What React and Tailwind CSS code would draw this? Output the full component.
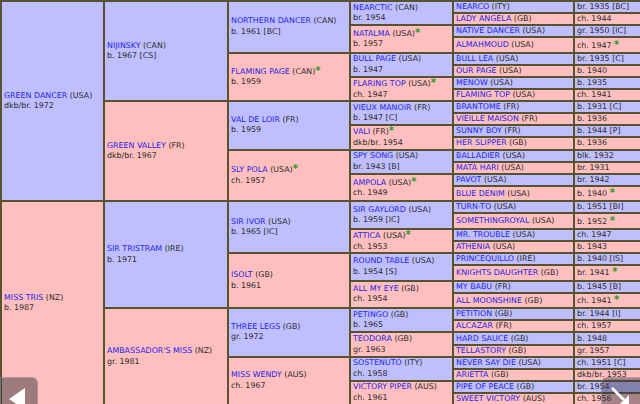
import React from "react";

const h = (name, country, year, star, sire, dam) => ({ name, country, year, star, sire, dam });
const L = (name, country, year, star) => ({ name, country, year, star });

const tree = [
  h("GREEN DANCER", "USA", "dkb/br. 1972", false,
    h("NIJINSKY", "CAN", "b. 1967 [CS]", false,
      h("NORTHERN DANCER", "CAN", "b. 1961 [BC]", false,
        h("NEARCTIC", "CAN", "br. 1954", false, L("NEARCO", "ITY", "br. 1935 [BC]"), L("LADY ANGELA", "GB", "ch. 1944")),
        h("NATALMA", "USA", "b. 1957", true, L("NATIVE DANCER", "USA", "gr. 1950 [IC]"), L("ALMAHMOUD", "USA", "ch. 1947", true))),
      h("FLAMING PAGE", "CAN", "b. 1959", true,
        h("BULL PAGE", "USA", "b. 1947", false, L("BULL LEA", "USA", "br. 1935 [C]"), L("OUR PAGE", "USA", "b. 1940")),
        h("FLARING TOP", "USA", "ch. 1947", true, L("MENOW", "USA", "b. 1935"), L("FLAMING TOP", "USA", "ch. 1941")))),
    h("GREEN VALLEY", "FR", "dkb/br. 1967", false,
      h("VAL DE LOIR", "FR", "b. 1959", false,
        h("VIEUX MANOIR", "FR", "b. 1947 [C]", false, L("BRANTOME", "FR", "b. 1931 [C]"), L("VIEILLE MAISON", "FR", "b. 1936")),
        h("VALI", "FR", "dkb/br. 1954", true, L("SUNNY BOY", "FR", "b. 1944 [P]"), L("HER SLIPPER", "GB", "b. 1936"))),
      h("SLY POLA", "USA", "ch. 1957", true,
        h("SPY SONG", "USA", "br. 1943 [B]", false, L("BALLADIER", "USA", "blk. 1932"), L("MATA HARI", "USA", "br. 1931")),
        h("AMPOLA", "USA", "ch. 1949", true, L("PAVOT", "USA", "br. 1942"), L("BLUE DENIM", "USA", "b. 1940", true))))),
  h("MISS TRIS", "NZ", "b. 1987", false,
    h("SIR TRISTRAM", "IRE", "b. 1971", false,
      h("SIR IVOR", "USA", "b. 1965 [IC]", false,
        h("SIR GAYLORD", "USA", "b. 1959 [IC]", false, L("TURN-TO", "USA", "b. 1951 [BI]"), L("SOMETHINGROYAL", "USA", "b. 1952", true)),
        h("ATTICA", "USA", "ch. 1953", true, L("MR. TROUBLE", "USA", "ch. 1947"), L("ATHENIA", "USA", "b. 1943"))),
      h("ISOLT", "GB", "b. 1961", false,
        h("ROUND TABLE", "USA", "b. 1954 [S]", false, L("PRINCEQUILLO", "IRE", "b. 1940 [IS]"), L("KNIGHTS DAUGHTER", "GB", "br. 1941", true)),
        h("ALL MY EYE", "GB", "ch. 1954", false, L("MY BABU", "FR", "b. 1945 [B]"), L("ALL MOONSHINE", "GB", "ch. 1941", true)))),
    h("AMBASSADOR'S MISS", "NZ", "gr. 1981", false,
      h("THREE LEGS", "GB", "gr. 1972", false,
        h("PETINGO", "GB", "b. 1965", false, L("PETITION", "GB", "br. 1944 [I]"), L("ALCAZAR", "FR", "ch. 1957")),
        h("TEODORA", "GB", "gr. 1963", false, L("HARD SAUCE", "GB", "b. 1948"), L("TELLASTORY", "GB", "gr. 1957"))),
      h("MISS WENDY", "AUS", "ch. 1967", false,
        h("SOSTENUTO", "ITY", "ch. 1958", false, L("NEVER SAY DIE", "USA", "ch. 1951 [C]"), L("ARIETTA", "GB", "dkb/br. 1953")),
        h("VICTORY PIPER", "AUS", "ch. 1961", false, L("PIPE OF PEACE", "GB", "br. 1954"), L("SWEET VICTORY", "AUS", "ch. 1956"))))),
];

const widths = ["w-[101px]", "w-[122px]", "w-[120px]", "w-[101px]"];

const Star = () => (
  <span className="text-[#1f9a1f] font-bold text-[10px] leading-[10px]">*</span>
);

const Name = ({ n }) => (
  <>
    <span className="text-[#2424e8]">{n.name}</span> ({n.country})
  </>
);

function Node({ n, depth, male }) {
  const bg = male ? "bg-[#bfbfff]" : "bg-[#ffbfbf]";
  if (depth === 4) {
    return (
      <div className={`flex gap-[2px] ${n.star ? "h-[13.5px]" : "h-[10.1px]"}`}>
        <div className={`w-[119px] shrink-0 ${bg} flex items-center pl-[2px] whitespace-nowrap`}>
          <span className="leading-[10px]"><Name n={n} /></span>
        </div>
        <div className={`w-[80px] shrink-0 ${bg} flex items-center pl-[2px] whitespace-nowrap`}>
          <span className="leading-[10px]">
            {n.year}
            {n.star && <> <Star /></>}
          </span>
        </div>
      </div>
    );
  }
  return (
    <div className="flex gap-[2px]">
      <div className={`${widths[depth]} shrink-0 ${bg} flex items-center pl-[2px] whitespace-nowrap`}>
        <div className="leading-[10.5px]">
          <div>
            <Name n={n} />
            {n.star && <Star />}
          </div>
          <div>{n.year}</div>
        </div>
      </div>
      <div className="flex flex-col gap-[2px]">
        <Node n={n.sire} depth={depth + 1} male={true} />
        <Node n={n.dam} depth={depth + 1} male={false} />
      </div>
    </div>
  );
}

export default function App() {
  return (
    <div className="relative w-[640px] h-[404px] overflow-hidden bg-white">
      <div
        className="w-max bg-[#57532f] p-[2px] flex flex-col gap-[2px] text-[7.9px] text-[#2b2b2b]"
        style={{ fontFamily: '"DejaVu Sans", Verdana, sans-serif' }}
      >
        <Node n={tree[0]} depth={0} male={true} />
        <Node n={tree[1]} depth={0} male={false} />
      </div>

      <div className="absolute left-0 top-[377px] w-[38px] h-[40px] rounded-tr-[6px] bg-[rgba(60,55,60,0.5)] border border-[rgba(200,200,200,0.35)]">
        <svg className="absolute left-[7px] top-[9px]" width="18" height="24" viewBox="0 0 18 24">
          <polygon points="1,12 17,1 17,23" fill="#ffffff" />
        </svg>
      </div>

      <div className="absolute left-[601px] top-[377px] w-[45px] h-[40px] rounded-tl-[6px] bg-[rgba(60,55,70,0.45)] border border-[rgba(200,200,200,0.35)]">
        <svg className="absolute left-[8px] top-[8px]" width="22" height="22" viewBox="0 0 22 22">
          <line x1="2" y1="2" x2="14" y2="14" stroke="#ffffff" strokeWidth="2.6" />
          <polygon points="19,9 19,19 9,19" fill="#ffffff" />
        </svg>
      </div>
    </div>
  );
}
